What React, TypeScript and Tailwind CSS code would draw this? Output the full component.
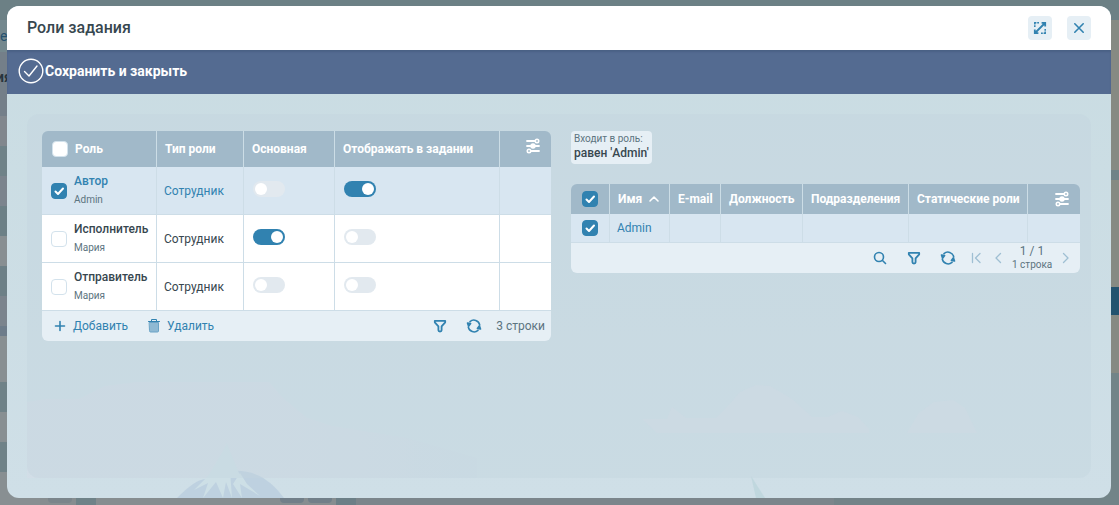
import { useState } from "react";
import type { ReactNode } from "react";

const initialRoles = [
  { id: 1, name: "Автор", user: "Admin", type: "Сотрудник", selected: true, main: false, shown: true },
  { id: 2, name: "Исполнитель", user: "Мария", type: "Сотрудник", selected: false, main: true, shown: false },
  { id: 3, name: "Отправитель", user: "Мария", type: "Сотрудник", selected: false, main: false, shown: false },
];

const employeeColumns = ["E-mail", "Должность", "Подразделения", "Статические роли"];

function Checkbox({ label, checked, onChange }: { label: string; checked: boolean; onChange: () => void }) {
  return (
    <span className="relative block size-4 shrink-0">
      <input
        type="checkbox"
        aria-label={label}
        checked={checked}
        onChange={onChange}
        className="block size-4 appearance-none rounded-sm border border-[#d3e2ec] bg-white checked:border-[#3182b0] checked:bg-[#3182b0]"
      />
      {checked && (
        <svg viewBox="0 0 16 16" className="pointer-events-none absolute inset-0 size-4" fill="none" stroke="white" strokeWidth="2" strokeLinecap="round" strokeLinejoin="round">
          <path d="M4.5 8.5 7 11l5-5.5" />
        </svg>
      )}
    </span>
  );
}

function Toggle({ label, checked, onChange }: { label: string; checked: boolean; onChange: () => void }) {
  return (
    <input
      type="checkbox"
      role="switch"
      aria-label={label}
      checked={checked}
      onChange={onChange}
      className="flex h-4 w-8 appearance-none items-center rounded-full bg-[#e2e9ef] px-0.5 before:size-3 before:rounded-full before:bg-white checked:justify-end checked:bg-[#3182b0]"
    />
  );
}

function Icon({ children, className = "size-4" }: { children: ReactNode; className?: string }) {
  return (
    <svg viewBox="0 0 16 16" className={className} fill="none" stroke="currentColor" strokeWidth="1.6" strokeLinecap="round" strokeLinejoin="round" aria-hidden="true">
      {children}
    </svg>
  );
}

function SlidersIcon() {
  return (
    <Icon>
      <path d="M2 3h8M2 8h12M6 13h8" strokeWidth="1.8" />
      <circle cx="12" cy="3" r="1.7" />
      <circle cx="8" cy="8" r="1.9" fill="currentColor" />
      <circle cx="4" cy="13" r="1.7" />
    </Icon>
  );
}

function FilterIcon() {
  return (
    <Icon>
      <path d="M2.8 2.8h10.4v1.5L9.6 8.4v3.9c0 .7-.6 1.2-1.6 1.2s-1.6-.5-1.6-1.2V8.4L2.8 4.3z" strokeWidth="1.8" />
    </Icon>
  );
}

function RefreshIcon() {
  return (
    <Icon>
      <path d="M4 3.6a5.9 5.9 0 0 1 9.7 3.2M12 12.4a5.9 5.9 0 0 1-9.7-3.2" />
      <path d="M1.5 5 4.6 5.6 2.6 8.2zM14.5 11 11.4 10.4 13.4 7.8z" fill="currentColor" />
    </Icon>
  );
}

function Backdrop() {
  return (
    <div className="absolute inset-0 flex justify-between overflow-hidden bg-[#7a858b]" aria-hidden="true">
      <div className="flex w-10 flex-col text-[#26516f]">
        <div className="h-5 bg-[#6c8085]" />
        <div className="h-8 bg-[#74888e] text-sm leading-8">ен</div>
        <div className="h-16 bg-[#747f89] text-sm leading-[50px] font-bold text-[#27343d]"><span className="-ml-1">ия</span></div>
        <div className="h-[30px] bg-[#81878d]" />
        <div className="h-[30px] bg-[#6f8288]" />
        <div className="h-[30px] bg-[#7b848d]" />
        <div className="h-[30px] bg-[#6c8086]" />
        <div className="h-[30px] bg-[#888f92]" />
        <div className="h-[30px] bg-[#6d8087]" />
        <div className="h-[30px] bg-[#7b848d]" />
        <div className="h-2.5 bg-[#6d7c8a]" />
        <div className="h-[46px] bg-[#888f92]" />
        <div className="h-[30px] bg-[#6f8288]" />
        <div className="h-[30px] bg-[#888f92]" />
        <div className="h-[30px] bg-[#6f8288]" />
        <div className="grow bg-[#888f92]" />
      </div>
      <div className="flex grow flex-col">
        <div className="h-5 bg-[#6c8085]" />
        <div className="grow" />
        <div className="flex h-2 bg-[#868d90]">
          <div className="ml-2 h-1.5 w-6 rounded-b bg-[#7b858b]" />
          <div className="ml-1 w-5 bg-[#6f8288]" />
          <div className="ml-[184px] h-1.5 w-6 rounded-b bg-[#717f89]" />
          <div className="ml-1 h-1.5 w-6 rounded-b bg-[#717f89]" />
          <div className="ml-1 w-5 bg-[#6c7f87]" />
          <div className="grow bg-[#7b858b]" />
          <div className="w-1/4 bg-[#738388]" />
        </div>
      </div>
      <div className="flex w-5 flex-col items-stretch">
        <div className="h-5 bg-[#6c8085]" />
        <div className="h-[150px] bg-[#868a83]" />
        <div className="h-2.5 bg-[#6f8288]" />
        <div className="h-[107px] bg-[#868a83]" />
        <div className="h-7 bg-[#23536f]" />
        <div className="h-[58px] bg-[#868a83]" />
        <div className="grow bg-[#728488]" />
      </div>
    </div>
  );
}

// Faint winter landscape along the bottom of the dialog
function Landscape() {
  return (
    <svg className="pointer-events-none absolute bottom-0 left-0 h-[180px] w-full" viewBox="0 0 1104 180" preserveAspectRatio="xMidYMax slice" aria-hidden="true">
      <defs>
        <linearGradient id="hill" x1="0" y1="0" x2="1" y2="0">
          <stop offset="0" stopColor="#d3dde7" />
          <stop offset=".6" stopColor="#d3dde7" />
          <stop offset="1" stopColor="#cddde5" />
        </linearGradient>
      </defs>
      <path d="M20 84 L38 81 H72 L98 68 L130 64 H262 L276 80 L300 100 L325 108 L400 120 L470 140 V160 H20z" fill="url(#hill)" opacity=".7" />
      <path d="M635 101h25l5-12 14 11h30l12-12 12-14 16-7 14 1 22 13 20 18h16l14-6 16 6 11 12v4H650zM900 115l12-20 15-11 19-2 12 8 12 25z" fill="#d3dde7" opacity=".75" />
      <path d="M170 180c13-13 22-20 32-19l18-29 3 21c24-2 40 8 54 27z" fill="#b8ccdd" opacity=".75" />
      <path d="M200 160 220 126l14 34zM214 142 220 124l3 28 2 28-6-16-3 16-7-16-13 16 5-15-14 7 15-15zM233 155l7 11 13 12-20-12 2 14-9-14z" fill="#cddfe6" />
      <path d="M744 158l14 22h-9z" fill="#bcd5dc" opacity=".8" />
    </svg>
  );
}

const headCell = "border-r border-[#ccdde6] px-2 text-left font-bold whitespace-nowrap last:border-r-0";
const bodyCell = "border-r border-b border-[#cddde7] last:border-r-0";

function RolesGrid() {
  const [roles, setRoles] = useState(initialRoles);

  function flip(id: number, key: "selected" | "main" | "shown") {
    setRoles(roles.map((r) => (r.id === id ? { ...r, [key]: !r[key] } : r)));
  }

  const allSelected = roles.every((r) => r.selected);

  return (
    <div className="overflow-hidden rounded-md">
      <table className="w-full table-fixed border-separate border-spacing-0">
        <colgroup>
          <col className="w-[115px]" />
          <col className="w-[87px]" />
          <col className="w-[91px]" />
          <col className="w-[165px]" />
          <col />
        </colgroup>
        <thead className="bg-[#a1b9c9] text-white">
          <tr className="h-9">
            <th className="border-r border-[#ccdde6] pl-2.5 text-left font-bold">
              <div className="flex items-center gap-[7px]">
                <Checkbox
                  label="Выбрать все роли"
                  checked={allSelected}
                  onChange={() => setRoles(roles.map((r) => ({ ...r, selected: !allSelected })))}
                />
                Роль
              </div>
            </th>
            <th className={headCell}>Тип роли</th>
            <th className={headCell}>Основная</th>
            <th className={headCell}>Отображать в задании</th>
            <th className="pr-2.5 pb-1.5">
              <button type="button" aria-label="Настройка колонок" className="ml-auto block">
                <SlidersIcon />
              </button>
            </th>
          </tr>
        </thead>
        <tbody>
          {roles.map((r) => (
            <tr key={r.id} className={r.selected ? "h-12 bg-[#d8e6f1] text-[#3182b0]" : "h-12 bg-white text-[#37474f]"}>
              <td className={`${bodyCell} pl-[9px]`}>
                <div className="flex items-center gap-[7px]">
                  <Checkbox label={r.name} checked={r.selected} onChange={() => flip(r.id, "selected")} />
                  <div className="pb-0.5">
                    <div className="leading-5 font-medium">{r.name}</div>
                    <div className="text-[10px] leading-[18px] text-[#5c7480]">{r.user}</div>
                  </div>
                </div>
              </td>
              <td className={`${bodyCell} px-[7px]`}>{r.type}</td>
              <td className={`${bodyCell} px-[9px] pb-1`}>
                <Toggle label={`Основная: ${r.name}`} checked={r.main} onChange={() => flip(r.id, "main")} />
              </td>
              <td className={`${bodyCell} px-[9px] pb-1`}>
                <Toggle label={`Отображать: ${r.name}`} checked={r.shown} onChange={() => flip(r.id, "shown")} />
              </td>
              <td className={bodyCell} />
            </tr>
          ))}
        </tbody>
      </table>
      <div className="flex h-[30px] items-center bg-[#e6eff5] pr-1.5 pl-2.5 text-[#3182b0]">
        <button type="button" className="flex items-center gap-[5px]">
          <Icon><path d="M8 3.5v9M3.5 8h9" /></Icon>
          Добавить
        </button>
        <button type="button" className="ml-[18px] flex items-center gap-[5px]">
          <Icon>
            <path d="M3.5 4.5h9V13a1 1 0 0 1-1 1h-7a1 1 0 0 1-1-1z" fill="#8fb9d3" stroke="#6aa3c6" strokeWidth="1" />
            <path d="M2.5 3.5h11M5.5 3V1.5h5V3" strokeWidth="1" />
          </Icon>
          Удалить
        </button>
        <div className="ml-auto flex items-center">
          <button type="button" aria-label="Фильтр"><FilterIcon /></button>
          <button type="button" aria-label="Обновить" className="ml-[18px]"><RefreshIcon /></button>
          <span className="ml-3.5 text-[#5c7480]">3 строки</span>
        </div>
      </div>
    </div>
  );
}

function EmployeesGrid() {
  const [selected, setSelected] = useState(true);

  return (
    <div className="overflow-hidden rounded-md">
      <table className="w-full table-fixed border-separate border-spacing-0">
        <colgroup>
          <col className="w-[39px]" />
          <col className="w-[60px]" />
          <col className="w-[51px]" />
          <col className="w-[82px]" />
          <col className="w-[106px]" />
          <col className="w-[119px]" />
          <col />
        </colgroup>
        <thead className="bg-[#a1b9c9] text-white">
          <tr className="h-[30px]">
            <th className="border-r border-[#ccdde6] pl-[11px]">
              <Checkbox label="Выбрать всех" checked={selected} onChange={() => setSelected(!selected)} />
            </th>
            <th className={headCell}>
              <button type="button" className="flex items-center gap-1">
                Имя
                <Icon><path d="M4 10 8 6l4 4" /></Icon>
              </button>
            </th>
            {employeeColumns.map((c) => (
              <th key={c} className={headCell}>{c}</th>
            ))}
            <th className="pr-2.5">
              <button type="button" aria-label="Настройка колонок" className="ml-auto block">
                <SlidersIcon />
              </button>
            </th>
          </tr>
        </thead>
        <tbody>
          <tr className={selected ? "h-[29px] bg-[#d8e6f1] text-[#3182b0]" : "h-[29px] bg-white text-[#37474f]"}>
            <td className={`${bodyCell} pl-[11px]`}>
              <Checkbox label="Admin" checked={selected} onChange={() => setSelected(!selected)} />
            </td>
            <td className={`${bodyCell} px-[7px]`}>Admin</td>
            {employeeColumns.map((c) => (
              <td key={c} className={bodyCell} />
            ))}
            <td className={bodyCell} />
          </tr>
        </tbody>
      </table>
      <div className="flex h-[30px] items-center justify-end bg-[#e6eff5] pr-1.5 text-[#3182b0]">
        <button type="button" aria-label="Поиск">
          <Icon>
            <circle cx="7" cy="7" r="4.5" />
            <path d="m10.5 10.5 3 3" />
          </Icon>
        </button>
        <button type="button" aria-label="Фильтр" className="ml-[18px]"><FilterIcon /></button>
        <button type="button" aria-label="Обновить" className="ml-[18px]"><RefreshIcon /></button>
        <button type="button" aria-label="Первая страница" className="ml-3 text-[#9fbfd3]">
          <Icon><path d="M4.5 3.5v9M12 3.5 7.5 8l4.5 4.5" strokeWidth="1.3" /></Icon>
        </button>
        <button type="button" aria-label="Предыдущая страница" className="ml-1.5 text-[#9fbfd3]">
          <Icon><path d="M10.5 3.5 6 8l4.5 4.5" strokeWidth="1.3" /></Icon>
        </button>
        <div className="ml-1.5 w-10 text-center whitespace-nowrap text-[#5c7480]">
          <div className="leading-[14px]">1 / 1</div>
          <div className="text-[10px] leading-[14px]">1 строка</div>
        </div>
        <button type="button" aria-label="Следующая страница" className="ml-1.5 text-[#9fbfd3]">
          <Icon><path d="M5.5 3.5 10 8l-4.5 4.5" strokeWidth="1.3" /></Icon>
        </button>
      </div>
    </div>
  );
}

function App() {
  return (
    <div className="relative flex min-h-screen flex-col pt-1.5 pr-2 pb-[7px] pl-[7px] font-[Roboto,sans-serif] text-xs text-[#37474f]">
      <Backdrop />
      <div role="dialog" aria-labelledby="dialog-title" className="relative flex grow flex-col overflow-hidden rounded-xl bg-linear-to-b from-[#c9dce2] to-[#cfdfe7]">
        <header className="flex h-11 shrink-0 items-center bg-white px-5">
          <h1 id="dialog-title" className="grow text-base font-medium">Роли задания</h1>
          <button type="button" aria-label="Развернуть" className="flex size-6 items-center justify-center rounded bg-[#e6eff5] text-[#3182b0]">
            <svg viewBox="0 0 16 16" className="size-4" fill="none" stroke="currentColor" strokeWidth="1.5" aria-hidden="true">
              <path d="M2.8 7V5.2M2.8 4.4V2.8h1.6M5.2 2.8H7M13.2 9v1.8M13.2 11.6v1.6h-1.6M10.8 13.2H9" />
              <path d="M9.6 2.8h3.6v3.6M2.8 9.6v3.6h3.6M13 3 3 13" strokeWidth="1.8" />
            </svg>
          </button>
          <button type="button" aria-label="Закрыть" className="ml-[15px] flex size-6 items-center justify-center rounded bg-[#e6eff5] text-[#3182b0]">
            <Icon><path d="m3.8 3.8 8.4 8.4M12.2 3.8l-8.4 8.4" /></Icon>
          </button>
        </header>
        <div className="flex h-11 shrink-0 items-center bg-[#546b91] pb-0.5 pl-[11px] shadow-[inset_0_2px_2px_#4a6185]">
          <button type="button" className="flex items-center gap-px text-sm font-bold text-white">
            <svg viewBox="0 0 26 26" className="size-[26px]" fill="none" stroke="currentColor" strokeWidth="1.4" strokeLinecap="round" strokeLinejoin="round" aria-hidden="true">
              <circle cx="13" cy="13" r="11.8" />
              <path d="m6.5 13.5 4.5 4.5 8-10" />
            </svg>
            Сохранить и закрыть
          </button>
        </div>
        <main className="relative flex grow flex-col p-5">
          <Landscape />
          <div className="relative flex grow items-start gap-5 rounded-xl bg-[#c4d4de]/40 pt-[17px] pr-[11px] pb-4 pl-[15px]">
            <section aria-label="Роли" className="min-w-0 flex-1">
              <RolesGrid />
            </section>
            <section aria-label="Сотрудники" className="flex min-w-0 flex-1 flex-col items-start gap-5">
              <button type="button" className="h-[33px] rounded bg-[#e6eff5] px-[3px] pb-0.5 text-left">
                <span className="block text-[10px] leading-3 text-[#5c7480]">Входит в роль:</span>
                <span className="block leading-4 font-medium">равен 'Admin'</span>
              </button>
              <div className="w-full">
                <EmployeesGrid />
              </div>
            </section>
          </div>
        </main>
      </div>
    </div>
  );
}

export default App;
